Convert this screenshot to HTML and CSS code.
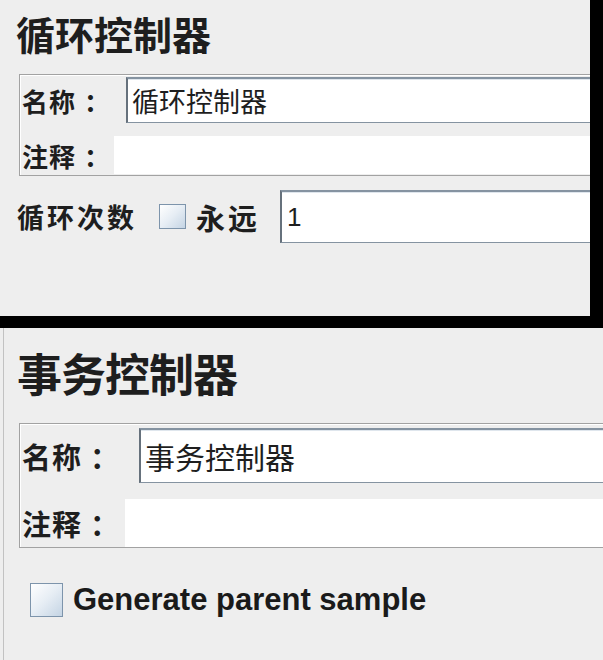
FILE: index.html
```html
<!DOCTYPE html>
<html lang="zh-CN">
<head>
    <meta charset="UTF-8">
    <meta name="viewport" content="width=device-width, initial-scale=1.0">
    <title>控制器设置</title>
    <link rel="stylesheet" href="styles.css">
</head>
<body>

    <!-- 循环控制器 -->
    <div class="panel panel-loop">
        <h1 class="title">循环控制器</h1>
        <div class="name-box">
            <div class="row">
                <span class="label">名称<span class="colon">：</span></span>
                <div class="field name-field">循环控制器</div>
            </div>
            <div class="row">
                <span class="label">注释<span class="colon">：</span></span>
                <div class="field note-field"></div>
            </div>
        </div>
        <div class="loop-row">
            <span class="loop-label">循环次数</span>
            <span class="checkbox"></span>
            <span class="forever">永远</span>
            <div class="field count-field">1</div>
        </div>
    </div>

    <!-- 事务控制器 -->
    <div class="panel panel-trans">
        <h1 class="title">事务控制器</h1>
        <div class="name-box">
            <div class="row">
                <span class="label">名称<span class="colon">：</span></span>
                <div class="field name-field">事务控制器</div>
            </div>
            <div class="row">
                <span class="label">注释<span class="colon">：</span></span>
                <div class="field note-field"></div>
            </div>
        </div>
        <label class="check-row">
            <span class="checkbox"></span>
            <span class="check-text">Generate parent sample</span>
        </label>
    </div>

</body>
</html>
```

FILE: styles.css
```css
body {
    margin: 0;
    padding: 0;
    background-color: #000;
    font-family: "Noto Sans CJK SC", "Liberation Sans", sans-serif;
    color: #1e1e1e;
}

.panel {
    background-color: #eeeeee;
    overflow: hidden;
    box-sizing: border-box;
}

.title {
    margin: 0;
    font-weight: bold;
    line-height: 1;
    white-space: nowrap;
}

.name-box {
    border: 1px solid #a2a2a2;
    border-right: none;
    box-shadow: inset 1px 1px 0 #fff;
    margin-right: -40px;
}

.row {
    display: flex;
    align-items: center;
}

/* TC punctuation keeps the full-width colon centred */
.label {
    flex: none;
    font-family: "Noto Sans CJK TC", sans-serif;
    font-weight: bold;
    white-space: nowrap;
}

.field {
    flex: 1;
    background-color: #fff;
    white-space: nowrap;
    display: flex;
    align-items: center;
}

.name-field,
.count-field {
    border: 1px solid #8593a1;
    border-top: 2px solid #8593a1;
    border-left: 2px solid #66717c;
    border-right: none;
    box-shadow: inset 0 1px 0 #dfe6ed;
}

.checkbox {
    flex: none;
    display: inline-block;
    box-sizing: border-box;
    border: 1px solid #7d94ab;
    background: linear-gradient(135deg, #ffffff 0%, #e6edf4 50%, #c4d4e4 100%);
}

/* loop controller */

.panel-loop {
    width: 590px;
    height: 316px;
    margin-bottom: 12px;
    padding: 14px 0 0 17px;
}

.panel-loop .title {
    font-size: 39px;
    margin-left: -1px;
}

.panel-loop .name-box {
    margin-top: 21px;
    margin-left: 2px;
    padding: 2px 0 1px 2px;
}

.panel-loop .row + .row {
    margin-top: 13px;
}

.panel-loop .label {
    width: 92px;
    font-size: 26px;
    letter-spacing: 1px;
}

.panel-loop .colon {
    margin-left: 8px;
}

.panel-loop .name-field {
    height: 46px;
    margin-left: 12px;
    padding-left: 4px;
    font-size: 27px;
    box-sizing: border-box;
}

.panel-loop .note-field {
    height: 38px;
}

.loop-row {
    display: flex;
    align-items: center;
    margin-top: 14px;
    margin-right: -40px;
}

.loop-label {
    font-size: 27px;
    font-weight: bold;
    letter-spacing: 3px;
}

.panel-loop .checkbox {
    width: 27px;
    height: 25px;
    margin-left: 22px;
}

.forever {
    font-size: 29px;
    font-weight: bold;
    margin-left: 10px;
    letter-spacing: 3px;
}

.count-field {
    height: 53px;
    margin-left: 20px;
    padding-left: 5px;
    box-sizing: border-box;
    font-family: "Liberation Sans", sans-serif;
    font-size: 26px;
}

/* transaction controller */

.panel-trans {
    width: 603px;
    height: 332px;
    padding: 22px 0 0 18px;
    box-shadow: inset 3px 0 0 #eeeeee, inset 4px 0 0 #c2c2c2;
}

.panel-trans .title {
    font-size: 45px;
    margin-left: -1px;
    letter-spacing: -1px;
}

.panel-trans .name-box {
    margin-top: 28px;
    margin-left: 1px;
    padding: 4px 0 0 2px;
}

.panel-trans .row + .row {
    margin-top: 16px;
}

.panel-trans .label {
    width: 103px;
    font-size: 29px;
    letter-spacing: 1px;
}

.panel-trans .colon {
    margin-left: 8px;
}

.panel-trans .name-field {
    height: 55px;
    margin-left: 14px;
    padding-left: 4px;
    font-size: 30px;
    box-sizing: border-box;
}

.panel-trans .note-field {
    height: 48px;
}

.check-row {
    display: flex;
    align-items: center;
    margin-top: 34px;
    margin-left: 12px;
}

.panel-trans .checkbox {
    width: 33px;
    height: 34px;
}

.check-text {
    margin-left: 10px;
    font-family: "Liberation Sans", sans-serif;
    font-size: 31px;
    font-weight: bold;
    color: #1a1a1a;
}
```
